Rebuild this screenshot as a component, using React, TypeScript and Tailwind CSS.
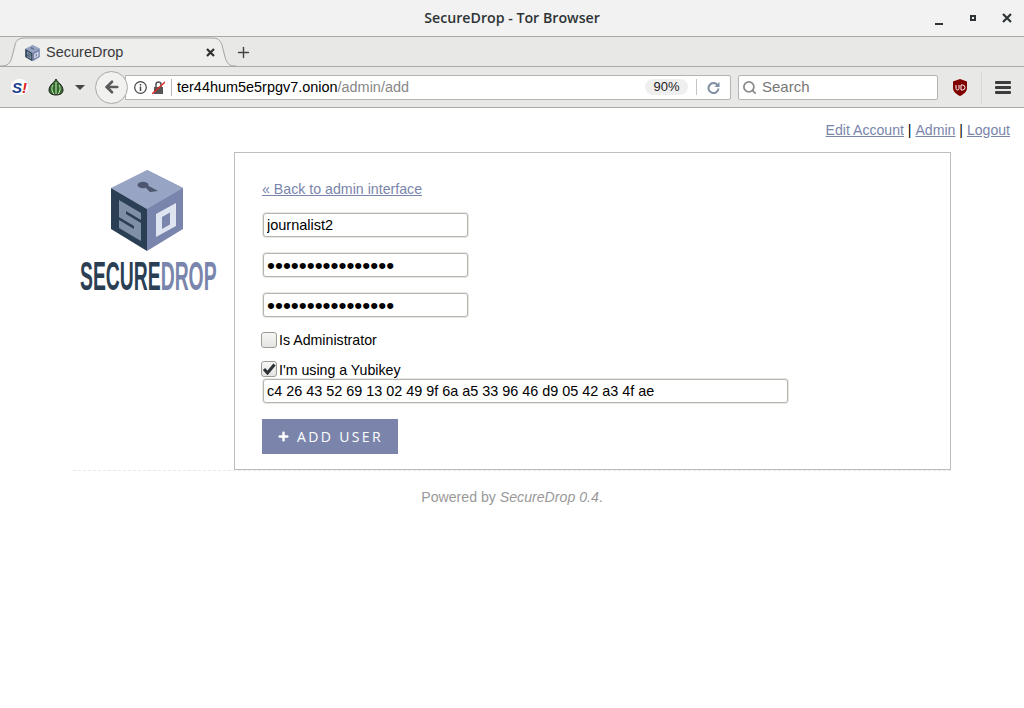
import { ArrowLeft, Plus, Search } from 'lucide-react';

const sans = 'font-["Liberation_Sans",sans-serif]';
const fieldClass =
  'block h-[24px] rounded-[3px] border border-[#b4b4ae] bg-white px-[3px] text-black shadow-[0_0_0_1px_#e9e9e6] outline-none';

function WindowBar() {
  return (
    <div className="relative flex h-[37px] items-center justify-center border-b border-[#a9a9a5] bg-[#f2f2f2]">
      <span className='font-["Open_Sans",sans-serif] text-[14.200px] font-semibold text-[#2e3436]'>SecureDrop - Tor Browser</span>
      <div className="absolute right-0 top-0 flex h-[36px] items-center">
        <span className="flex w-[34px] justify-center pt-[6px]">
          <span className="mt-[5px] h-[2px] w-[8px] bg-[#2e3436]" />
        </span>
        <span className="flex w-[34px] justify-center">
          <span className="h-[6px] w-[6px] border-2 border-[#2e3436]" />
        </span>
        <span className="flex w-[34px] justify-center">
          <svg width="10" height="10" viewBox="0 0 10 10" className="text-[#2e3436]">
            <path d="M1 1l8 8M9 1l-8 8" stroke="currentColor" strokeWidth="2.200" />
          </svg>
        </span>
      </div>
    </div>
  );
}

function CubeLogo({ size = 74 }: { size?: number }) {
  return (
    <svg width={size} height={(size * 82) / 74} viewBox="0 0 74 82">
      <path d="M37 0L73 18V59L37 81Z" fill="#7a85ad" />
      <path d="M37 0L73 18L37 39L1 18Z" fill="#98a4c4" />
      <path d="M1 18L37 39V81L1 59Z" fill="#2b3f54" />
      <ellipse cx="33" cy="15" rx="5.500" ry="3.300" fill="#4c566f" />
      <path d="M37 15L48 21L40 22L35 17Z" fill="#4c566f" />
      <path
        d="M9 30L31 43V71L9 58ZM16 41L31 50V53L16 44ZM9 47L24 56V59L9 50Z"
        fill="#7f8fa6"
        fillRule="evenodd"
      />
      <path d="M46 44L66 33V56L46 67ZM52 47V59L60 54.500V42.500Z" fill="#dfe4f1" fillRule="evenodd" />
    </svg>
  );
}

function TabStrip() {
  return (
    <div className={`flex h-[30px] items-end border-b border-[#a9a9a5] bg-[#e8e8e7] ${sans}`}>
      <div className="relative -mb-px flex h-[30px] w-[236px] items-center pt-[2px]">
        <svg className="absolute inset-0" width="236" height="30" viewBox="0 0 236 30">
          <path
            d="M0 29C8 29 10 27 12 20L15 8C16 3 19 1 25 1H212C218 1 220 3 222 8L225 20C227 27 229 29 236 29"
            fill="#eeeeed"
            stroke="#a4a6a3"
          />
        </svg>
        <span className="relative ml-[25px] flex w-[16px]">
          <CubeLogo size={15} />
        </span>
        <span className="relative ml-[5px] w-[160px] text-[14.500px] text-[#3a3a3a]">SecureDrop</span>
        <svg className="relative -mt-[1px]" width="9" height="9" viewBox="0 0 9 9">
          <path d="M1 1l7 7M8 1l-7 7" stroke="#2f2f2f" strokeWidth="2.200" />
        </svg>
      </div>
      <span className="mb-[5px] -ml-[1px] flex">
        <Plus size={17} strokeWidth={2} className="text-[#444]" />
      </span>
    </div>
  );
}

function Toolbar() {
  return (
    <div className={`flex h-[41px] items-center border-b border-[#a9a9a5] bg-[#e8e8e7] ${sans}`}>
      <span className="ml-[11px] flex h-[16px] w-[17px] items-center justify-center rounded-full bg-white text-[15px] font-bold italic leading-none text-[#1d3f91]">
        S<span className="text-[#e02020]">!</span>
      </span>
      <svg className="ml-[20px]" width="16" height="18" viewBox="0 0 16 18">
        <path d="M8 1C9 4 15 7 15 12C15 15.500 12 17 8 17C4 17 1 15.500 1 12C1 7 7 4 8 1Z" fill="#2f6a2a" stroke="#222" />
        <path d="M8 4V16M5 7C3 10 4 14 6 16M11 7C13 10 12 14 10 16" stroke="#d6ecc8" fill="none" />
      </svg>
      <span className="ml-[11px] h-0 w-0 border-x-[5px] border-t-[5px] border-x-transparent border-t-[#444]" />
      <div className="relative ml-[10px] flex h-[33px] items-center">
        <span className="relative z-10 flex h-[33px] w-[33px] items-center justify-center rounded-full border border-[#a9a9a5] bg-[#f1f1f0]">
          <ArrowLeft size={18} strokeWidth={3.500} className="text-[#5a5a5a]" />
        </span>
        <div className="-ml-[3px] flex h-[25px] w-[606px] items-center rounded-r-[2px] border border-[#b4b4b0] bg-white">
          <svg className="ml-[8px]" width="13" height="13" viewBox="0 0 13 13">
            <circle cx="6.500" cy="6.500" r="5.800" fill="none" stroke="#444" strokeWidth="1.200" />
            <path d="M6.500 5.500v4.500M6.500 3v1.500" stroke="#444" strokeWidth="1.500" />
          </svg>
          <svg className="ml-[5px]" width="13" height="13" viewBox="0 0 13 13">
            <path d="M2 6h9v7H2z" fill="#555" />
            <path d="M4 6V3.500a2.500 2.500 0 0 1 5 0V6" fill="none" stroke="#555" strokeWidth="1.500" />
            <path d="M0 13L13 1" stroke="#e02a2a" strokeWidth="1.500" />
          </svg>
          <span className="ml-[6px] h-[17px] w-px bg-[#b8b8b8]" />
          <span className="ml-[5px] mt-[1px] whitespace-pre text-[14.450px] text-black">
            ter44hum5e5rpgv7.onion<span className="text-[#888]">/admin/add</span>
          </span>
          <span className="ml-auto flex h-[16px] w-[43px] items-center justify-center rounded-full bg-[#efefef] text-[13px] text-[#222]">90%</span>
          <span className="ml-[8px] h-[16px] w-px bg-[#c4c4c4]" />
          <span className="flex w-[33px] justify-center">
            <svg width="13" height="13" viewBox="0 0 13 13">
              <path d="M10.500 4A5 5 0 1 0 11.500 7.500" fill="none" stroke="#7d8ea3" strokeWidth="2" />
              <path d="M12.500 1V6H7.500Z" fill="#7d8ea3" />
            </svg>
          </span>
        </div>
      </div>
      <div className="ml-[7px] flex h-[25px] w-[200px] items-center rounded-[2px] border border-[#b4b4b0] bg-white">
        <Search size={15} strokeWidth={2.800} className="ml-[3px] text-[#8a8a8a]" />
        <span className="ml-[5px] mt-[1px] text-[15px] text-[#777]">Search</span>
      </div>
      <svg className="ml-[15px]" width="14" height="17" viewBox="0 0 14 17">
        <path d="M7 0L14 2.500V9C14 13 10 15.500 7 17C4 15.500 0 13 0 9V2.500Z" fill="#800000" />
        <path d="M3 6v3.500a1.500 1.500 0 0 0 3 0V6M8 6v5h1.500a2.500 2.500 0 0 0 0-5z" fill="none" stroke="#fff" strokeWidth="1" />
      </svg>
      <span className="ml-[14px] h-[33px] w-px bg-[#d8d8d6]" />
      <span className="ml-[13px] flex flex-col gap-[2px]">
        <span className="h-[3px] w-[16px] rounded-[1px] bg-[#3c3c3c]" />
        <span className="h-[3px] w-[16px] rounded-[1px] bg-[#3c3c3c]" />
        <span className="h-[3px] w-[16px] rounded-[1px] bg-[#3c3c3c]" />
      </span>
    </div>
  );
}

function Checkbox({ checked }: { checked?: boolean }) {
  return (
    <span className="flex h-[16px] w-[16px] items-center justify-center rounded-[3px] border border-[#9c9c97] bg-gradient-to-b from-[#f6f6f5] to-[#e4e4e2]">
      {checked && (
        <svg width="14" height="12" viewBox="0 0 14 12">
          <path d="M2 6l3.500 4L12.500 1.500" fill="none" stroke="#2e3436" strokeWidth="3" />
        </svg>
      )}
    </span>
  );
}

function Logo() {
  return (
    <div className="flex w-[161px] flex-col items-center pt-[18px]">
      <div className="ml-[-13px]">
        <CubeLogo />
      </div>
      <div className='ml-[-12px] mt-[6px] flex h-[36px] w-[136px] items-center font-["Liberation_Sans",sans-serif] text-[41px] font-bold leading-none'>
        <span className="inline-block origin-left scale-x-[0.472] whitespace-nowrap">
          <span className="text-[#2b3f54]">SECURE</span>
          <span className="text-[#7a85ad]">DROP</span>
        </span>
      </div>
    </div>
  );
}

function AddUserForm() {
  return (
    <div className="h-[318px] w-[717px] border border-[#bdbdbd] pl-[27px] pt-[27px]">
      <a className="block text-[14.200px] leading-[18px] text-[#7a85ab] underline">« Back to admin interface</a>
      <input readOnly value="journalist2" className={`mt-[15px] ml-[1px] w-[205px] text-[14.500px] ${fieldClass}`} />
      <input readOnly value="••••••••••••••••" className={`mt-[16px] ml-[1px] w-[205px] text-[22.700px] ${fieldClass}`} />
      <input readOnly value="••••••••••••••••" className={`mt-[16px] ml-[1px] w-[205px] text-[22.700px] ${fieldClass}`} />
      <label className="mt-[14px] flex items-center text-[14.200px] leading-[18px] text-black">
        <span className="-ml-[1px] mr-[2px]">
          <Checkbox />
        </span>
        <span>Is Administrator</span>
      </label>
      <label className="mt-[12px] flex items-start text-[14.200px] leading-[16px] text-black">
        <span className="-ml-[1px] mr-[2px]">
          <Checkbox checked />
        </span>
        <span className="mt-[1px]">I'm using a Yubikey</span>
      </label>
      <input
        readOnly
        value="c4 26 43 52 69 13 02 49 9f 6a a5 33 96 46 d9 05 42 a3 4f ae"
        className={`mt-[1px] ml-[1px] w-[525px] text-[14.400px] ${fieldClass}`}
      />
      <button className='mt-[16px] flex h-[35px] w-[136px] items-center justify-center gap-[7px] bg-[#7b85ab] font-["Open_Sans",sans-serif] text-[14px] font-medium tracking-[2.350px] text-white'>
        <Plus size={13} strokeWidth={4.500} />
        <span>ADD USER</span>
      </button>
    </div>
  );
}

export default function App() {
  return (
    <div className={`h-[708px] w-[1024px] overflow-hidden bg-white ${sans}`}>
      <WindowBar />
      <TabStrip />
      <Toolbar />
      <nav className="flex h-[44px] items-center justify-end pr-[14px] pt-[1px] text-[14.100px] text-black">
        <a className="text-[#7a85ab] underline">Edit Account</a>
        <span className="whitespace-pre"> | </span>
        <a className="text-[#7a85ab] underline">Admin</a>
        <span className="whitespace-pre"> | </span>
        <a className="text-[#7a85ab] underline">Logout</a>
      </nav>
      <div className="ml-[73px] flex w-[878px] border-b border-dashed border-[#e8e8e8]">
        <Logo />
        <AddUserForm />
      </div>
      <p className="mt-[17px] text-center text-[14.150px] leading-[18px] text-[#999]">
        Powered by <em>SecureDrop 0.4</em>.
      </p>
    </div>
  );
}
